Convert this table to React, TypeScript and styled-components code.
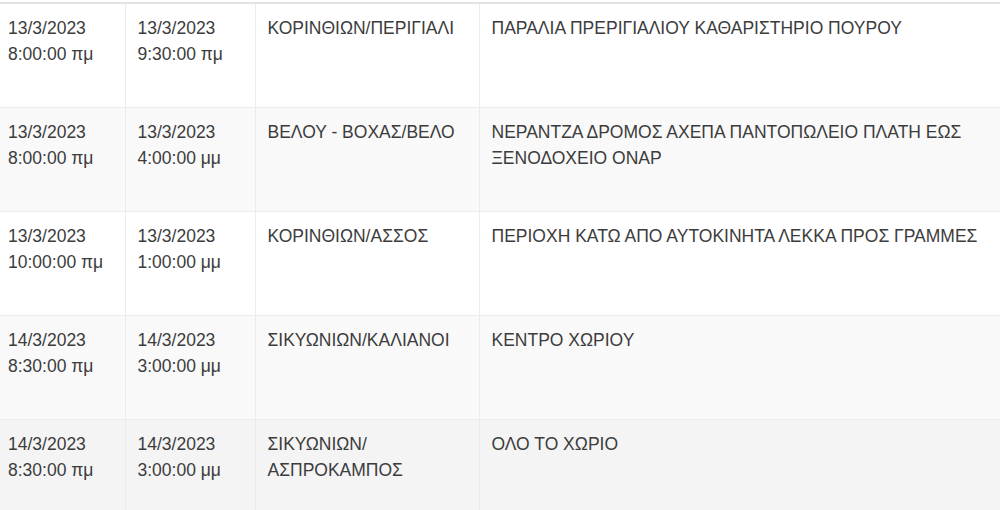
import styled, { createGlobalStyle } from 'styled-components';

interface Outage {
  from: [string, string];
  to: [string, string];
  area: string[];
  place: string;
}

const outages: Outage[] = [
  {
    from: ['13/3/2023', '8:00:00 πμ'],
    to: ['13/3/2023', '9:30:00 πμ'],
    area: ['ΚΟΡΙΝΘΙΩΝ/ΠΕΡΙΓΙΑΛΙ'],
    place: 'ΠΑΡΑΛΙΑ ΠΡΕΡΙΓΙΑΛΙΟΥ ΚΑΘΑΡΙΣΤΗΡΙΟ ΠΟΥΡΟΥ',
  },
  {
    from: ['13/3/2023', '8:00:00 πμ'],
    to: ['13/3/2023', '4:00:00 μμ'],
    area: ['ΒΕΛΟΥ - ΒΟΧΑΣ/ΒΕΛΟ'],
    place: 'ΝΕΡΑΝΤΖΑ ΔΡΟΜΟΣ ΑΧΕΠΑ ΠΑΝΤΟΠΩΛΕΙΟ ΠΛΑΤΗ ΕΩΣ ΞΕΝΟΔΟΧΕΙΟ ΟΝΑΡ',
  },
  {
    from: ['13/3/2023', '10:00:00 πμ'],
    to: ['13/3/2023', '1:00:00 μμ'],
    area: ['ΚΟΡΙΝΘΙΩΝ/ΑΣΣΟΣ'],
    place: 'ΠΕΡΙΟΧΗ ΚΑΤΩ ΑΠΟ ΑΥΤΟΚΙΝΗΤΑ ΛΕΚΚΑ ΠΡΟΣ ΓΡΑΜΜΕΣ',
  },
  {
    from: ['14/3/2023', '8:30:00 πμ'],
    to: ['14/3/2023', '3:00:00 μμ'],
    area: ['ΣΙΚΥΩΝΙΩΝ/ΚΑΛΙΑΝΟΙ'],
    place: 'ΚΕΝΤΡΟ ΧΩΡΙΟΥ',
  },
  {
    from: ['14/3/2023', '8:30:00 πμ'],
    to: ['14/3/2023', '3:00:00 μμ'],
    area: ['ΣΙΚΥΩΝΙΩΝ/', 'ΑΣΠΡΟΚΑΜΠΟΣ'],
    place: 'ΟΛΟ ΤΟ ΧΩΡΙΟ',
  },
];

const GlobalStyle = createGlobalStyle`
  body {
    margin: 0;
    background: #fff;
    font-family: 'Liberation Sans', Arial, sans-serif;
  }
`;

const Lines = ({ lines }: { lines: string[] }) => (
  <>
    {lines.map((line, i) => (
      <Line key={i}>{line}</Line>
    ))}
  </>
);

export default function App() {
  return (
    <>
      <GlobalStyle />
      <Wrapper>
        <Table>
          <colgroup>
            <col style={{ width: 125 }} />
            <col style={{ width: 130 }} />
            <col style={{ width: 224 }} />
            <col />
          </colgroup>
          <tbody>
            {outages.map((row, i) => (
              <Row key={i} $striped={i % 2 === 1} $hover={i === 4}>
                <Cell $first>
                  <Lines lines={row.from} />
                </Cell>
                <Cell>
                  <Lines lines={row.to} />
                </Cell>
                <Cell>
                  <Lines lines={row.area} />
                </Cell>
                <Cell>{row.place}</Cell>
              </Row>
            ))}
          </tbody>
        </Table>
      </Wrapper>
    </>
  );
}

const Wrapper = styled.div`
  width: 1000px;
  height: 510px;
  overflow: hidden;
  padding-top: 2px;
  box-sizing: border-box;
`;

const Table = styled.table`
  width: 1000px;
  table-layout: fixed;
  border-collapse: collapse;
  border-top: 2px solid #e4e4e4;
`;

const Row = styled.tr<{ $striped: boolean; $hover: boolean }>`
  background: ${({ $striped, $hover }) => ($hover ? '#f4f4f4' : $striped ? '#f9f9f9' : '#fff')};
`;

const Cell = styled.td<{ $first?: boolean }>`
  vertical-align: top;
  padding: 11px 12px 40px ${({ $first }) => ($first ? '8px' : '12px')};
  border-top: 1px solid #ececec;
  border-left: ${({ $first }) => ($first ? 'none' : '1px solid #ececec')};
  font-size: 17.5px;
  line-height: 26px;
  color: #3c3c3c;
  box-sizing: border-box;
  overflow-wrap: break-word;
`;

const Line = styled.div`
  white-space: nowrap;
`;
